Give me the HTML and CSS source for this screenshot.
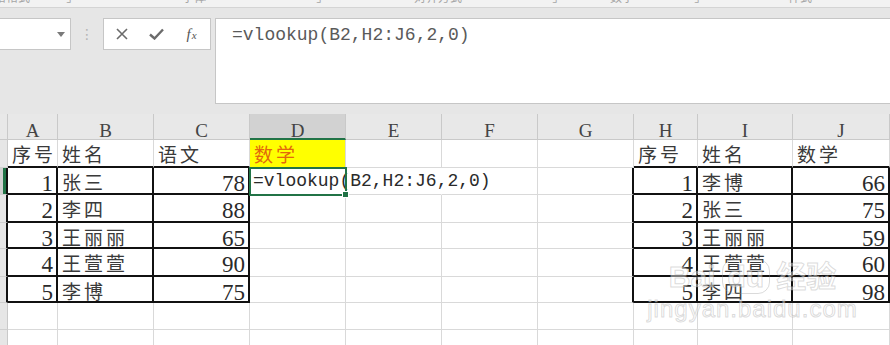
FILE: index.html
```html
<!DOCTYPE html>
<html lang="zh-CN">
<head>
  <meta charset="UTF-8">
  <title>vlookup</title>
  <link rel="stylesheet" href="styles.css">
</head>
<body>
  <div class="tail">
    <span class="seg s1">单元格格式</span>
    <span class="seg s2">⌟</span>
    <span class="seg s3">字体</span>
    <span class="seg s4">⌟</span>
    <span class="seg s5">对齐方式</span>
    <span class="seg s6">⌟</span>
    <span class="seg s7">数字</span>
    <span class="seg s8">⌟</span>
    <span class="seg s9">样式</span>
  </div>

  <div class="bar">
    <div class="namebox"><span class="caret"></span></div>
    <div class="grip">⋮</div>
    <div class="fxbtns">
      <div class="slot">
        <svg width="12" height="12" viewBox="0 0 12 12"><path d="M1 1L11 11M11 1L1 11" stroke="#6b6b6b" stroke-width="1.6" fill="none"/></svg>
      </div>
      <div class="slot">
        <svg width="15" height="12" viewBox="0 0 15 12"><path d="M1 6.5L5.5 10.5L14 1.5" stroke="#6b6b6b" stroke-width="2.4" fill="none"/></svg>
      </div>
      <div class="slot"><span class="fx"><i>f</i><i class="x">x</i></span></div>
    </div>
    <div class="formula">=vlookup(B2,H2:J6,2,0)</div>
  </div>

  <div class="sheet">
    <!-- column headers -->
    <div class="c h"></div>
    <div class="c h">A</div>
    <div class="c h">B</div>
    <div class="c h">C</div>
    <div class="c h on">D</div>
    <div class="c h">E</div>
    <div class="c h">F</div>
    <div class="c h">G</div>
    <div class="c h">H</div>
    <div class="c h">I</div>
    <div class="c h">J</div>

    <!-- row 1 -->
    <div class="c r"></div>
    <div class="c t bb">序号</div>
    <div class="c t bb">姓名</div>
    <div class="c t bb">语文</div>
    <div class="c t yellow">数学</div>
    <div class="c"></div>
    <div class="c"></div>
    <div class="c"></div>
    <div class="c t bb">序号</div>
    <div class="c t bb">姓名</div>
    <div class="c t bb">数学</div>

    <!-- row 2 -->
    <div class="c r on br"></div>
    <div class="c n bb br">1</div>
    <div class="c t bb br">张三</div>
    <div class="c n bb br">78</div>
    <div class="c m active">=vlookup(B2,H2:J6,2,0)</div>
    <div class="c nr"></div>
    <div class="c"></div>
    <div class="c br"></div>
    <div class="c n bb br">1</div>
    <div class="c t bb br">李博</div>
    <div class="c n bb br">66</div>

    <!-- row 3 -->
    <div class="c r br"></div>
    <div class="c n bb br">2</div>
    <div class="c t bb br">李四</div>
    <div class="c n bb br">88</div>
    <div class="c"></div>
    <div class="c"></div>
    <div class="c"></div>
    <div class="c br"></div>
    <div class="c n bb br">2</div>
    <div class="c t bb br">张三</div>
    <div class="c n bb br">75</div>

    <!-- row 4 -->
    <div class="c r br"></div>
    <div class="c n bb br">3</div>
    <div class="c t bb br">王丽丽</div>
    <div class="c n bb br">65</div>
    <div class="c"></div>
    <div class="c"></div>
    <div class="c"></div>
    <div class="c br"></div>
    <div class="c n bb br">3</div>
    <div class="c t bb br">王丽丽</div>
    <div class="c n bb br">59</div>

    <!-- row 5 -->
    <div class="c r br"></div>
    <div class="c n bb br">4</div>
    <div class="c t bb br">王萱萱</div>
    <div class="c n bb br">90</div>
    <div class="c"></div>
    <div class="c"></div>
    <div class="c"></div>
    <div class="c br"></div>
    <div class="c n bb br">4</div>
    <div class="c t bb br">王萱萱</div>
    <div class="c n bb br">60</div>

    <!-- row 6 -->
    <div class="c r br"></div>
    <div class="c n bb br">5</div>
    <div class="c t bb br">李博</div>
    <div class="c n bb br">75</div>
    <div class="c"></div>
    <div class="c"></div>
    <div class="c"></div>
    <div class="c br"></div>
    <div class="c n bb br">5</div>
    <div class="c t bb br">李四</div>
    <div class="c n bb br">98</div>

    <!-- row 7 -->
    <div class="c r"></div>
    <div class="c"></div>
    <div class="c"></div>
    <div class="c"></div>
    <div class="c"></div>
    <div class="c"></div>
    <div class="c"></div>
    <div class="c"></div>
    <div class="c"></div>
    <div class="c"></div>
    <div class="c"></div>

    <!-- row 8 -->
    <div class="c r"></div>
    <div class="c"></div>
    <div class="c"></div>
    <div class="c"></div>
    <div class="c"></div>
    <div class="c"></div>
    <div class="c"></div>
    <div class="c"></div>
    <div class="c"></div>
    <div class="c"></div>
    <div class="c"></div>
  </div>

  <div class="mark">
    <div class="mark-logo"><span>Bai</span><span class="du">du</span><span>经验</span></div>
    <div class="mark-url">jingyan.baidu.com</div>
  </div>
</body>
</html>
```

FILE: styles.css
```css
body {
  margin: 0;
  width: 890px;
  height: 345px;
  overflow: hidden;
  position: relative;
  background-color: #e6e6e6;
  font-family: "Liberation Serif", serif;
}

/* bottom edge of the ribbon, labels cut off */
.tail {
  display: flex;
  height: 7px;
  overflow: hidden;
  background-color: #f2f2f2;
  border-bottom: 1px solid #d4d4d4;
  font: 12px "Noto Sans CJK SC", sans-serif;
  color: #a6a6a6;
}

.seg {
  margin-top: -11px;
  line-height: 16px;
}

.s1 { margin-left: -30px; }
.s2 { margin-left: 36px; }
.s3 { margin-left: 110px; }
.s4 { margin-left: 110px; }
.s5 { margin-left: 92px; }
.s6 { margin-left: 90px; }
.s7 { margin-left: 52px; }
.s8 { margin-left: 60px; }
.s9 { margin-left: 88px; }

.bar {
  display: flex;
  align-items: flex-start;
  height: 106px;
  padding-top: 10px;
  box-sizing: border-box;
}

.namebox {
  display: flex;
  align-items: center;
  justify-content: flex-end;
  width: 72px;
  height: 32px;
  margin-left: -1px;
  padding-right: 5px;
  box-sizing: border-box;
  background-color: #fff;
  border: 1px solid #c6c6c6;
}

.caret {
  width: 0;
  height: 0;
  border-left: 4px solid transparent;
  border-right: 4px solid transparent;
  border-top: 5px solid #7a7a7a;
}

.grip {
  width: 32px;
  height: 32px;
  display: flex;
  align-items: center;
  justify-content: center;
  font: 14px "DejaVu Sans", sans-serif;
  color: #b4b4b4;
}

.fxbtns {
  display: flex;
  align-items: center;
  width: 108px;
  height: 32px;
  box-sizing: border-box;
  background-color: #fff;
  border: 1px solid #c6c6c6;
}

.slot {
  width: 35px;
  display: flex;
  justify-content: center;
  align-items: center;
}

.fx {
  font: italic 15px "Liberation Serif", serif;
  color: #555;
}

.fx .x {
  font-size: 11px;
  margin-left: 1px;
}

.formula {
  flex: 1;
  height: 86px;
  margin-left: 4px;
  padding: 6px 0 0 16px;
  box-sizing: border-box;
  background-color: #fff;
  border: 1px solid #c6c6c6;
  border-right: none;
  font: 18px "Liberation Mono", monospace;
  color: #5a5a5a;
}

.sheet {
  display: grid;
  grid-template-columns: 8px 50px repeat(6, 96px) 64px 95px 97px;
  grid-template-rows: 26px 28px 27px 28px 26px 28px 26px 27px 27px;
  background-color: #fff;
}

.c {
  box-sizing: border-box;
  border-right: 1px solid #d9d9d9;
  border-bottom: 1px solid #d9d9d9;
  padding: 0 3px;
  white-space: nowrap;
  color: #222;
}

.h {
  background-color: #e8e8e8;
  border-right-color: #c9c9c9;
  border-bottom-color: #c9c9c9;
  text-align: center;
  font-size: 19px;
  line-height: 25px;
  padding-top: 4px;
  color: #444;
}

.h.on {
  background-color: #d2d2d2;
  border-bottom: 2px solid #217346;
}

.r {
  padding: 0;
  background-color: #e6e6e6;
  border-right-color: #c9c9c9;
  border-bottom-color: #cfcfcf;
}

.r.on {
  background-color: #cfcfcf;
  box-shadow: inset -3px 0 0 #217346;
}

.t {
  font: 19px "Noto Sans CJK SC", sans-serif;
  letter-spacing: 3px;
  line-height: 27px;
  padding-left: 4px;
  color: #3a3a3a;
}

.n {
  text-align: right;
  font-size: 23px;
  line-height: 27px;
  padding-top: 2px;
  color: #2a2a2a;
}

.m {
  font: 18px "Liberation Mono", monospace;
  line-height: 27px;
  color: #2a2a2a;
}

.yellow {
  background-color: #ffff00;
  color: #e2670c;
}

.bb {
  border-bottom: 2px solid #111;
}

.br {
  border-right: 2px solid #111;
}

.nr {
  border-right-color: transparent;
}

.active {
  position: relative;
  z-index: 1;
  outline: 2px solid #217346;
  outline-offset: -1px;
}

.active::after {
  content: "";
  position: absolute;
  right: -4px;
  bottom: -4px;
  width: 5px;
  height: 5px;
  background-color: #217346;
  border: 1px solid #fff;
}

/* site watermark */
.mark {
  position: absolute;
  left: 640px;
  top: 258px;
  width: 225px;
  text-align: center;
  color: rgba(255, 255, 255, 0.45);
  -webkit-text-stroke: 1px rgba(150, 150, 150, 0.35);
  z-index: 2;
}

.mark-logo {
  font: bold 30px "Liberation Sans", "Noto Sans CJK SC", sans-serif;
  line-height: 38px;
}

.mark-logo .du {
  margin: 0 6px;
  padding: 0 5px;
  border: 1px solid rgba(150, 150, 150, 0.35);
  border-radius: 12px;
}

.mark-url {
  font: 24px "Liberation Sans", sans-serif;
  letter-spacing: 1px;
  line-height: 26px;
}
```
